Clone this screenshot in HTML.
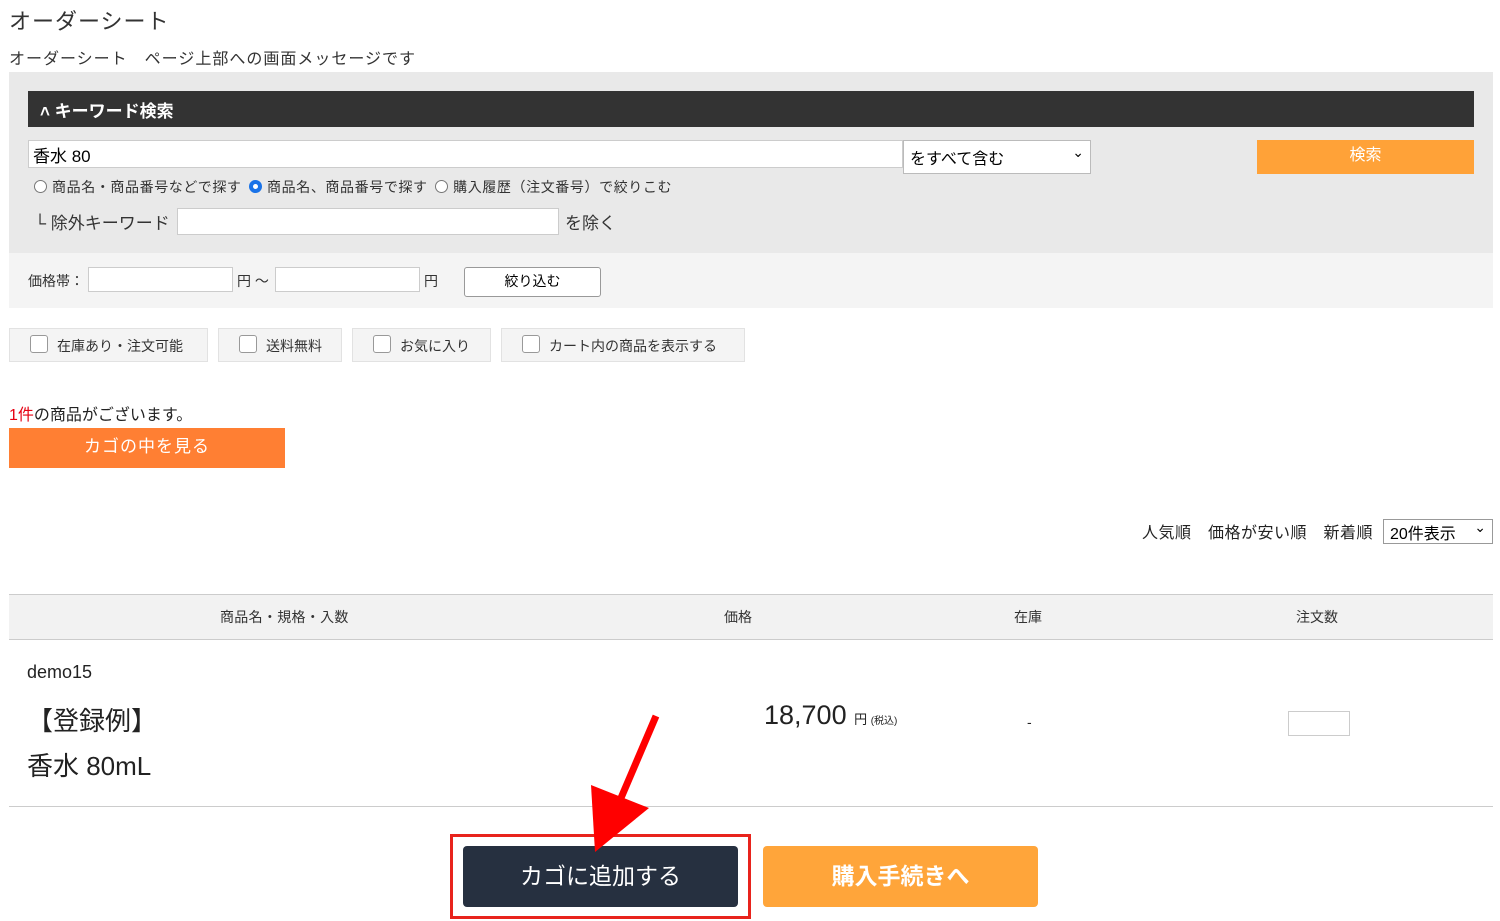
<!DOCTYPE html>
<html><head><meta charset="utf-8"><style>
body{margin:0;width:1500px;height:921px;background:#fff;font-family:"Liberation Sans","Noto Sans CJK JP",sans-serif;color:#222;position:relative;overflow:hidden}
.a{position:absolute;white-space:nowrap}
.inp{position:absolute;background:#fff;border:1px solid #ccc;box-sizing:border-box}
.cb{position:absolute;top:328px;height:34px;background:#f4f4f4;border:1px solid #e2e2e2;box-sizing:border-box;font-size:14px;line-height:34px;color:#333}
.cb i{position:absolute;left:20px;top:6px;width:18px;height:18px;border:1px solid #999;border-radius:3px;background:#fff;box-sizing:border-box}
.rd{display:inline-block;width:13px;height:13px;border:1px solid #777;border-radius:50%;background:#fff;vertical-align:-1px;margin-right:5px;margin-left:3px;box-sizing:border-box}
</style></head><body>
<div class="a" style="left:9px;top:4px;font-size:22px;color:#333;letter-spacing:1px">オーダーシート</div>
<div class="a" style="left:9px;top:45px;font-size:16px;color:#333;letter-spacing:1px">オーダーシート　ページ上部への画面メッセージです</div>
<div class="a" style="left:9px;top:72px;width:1484px;height:181px;background:#e9e9e9"></div>
<div class="a" style="left:9px;top:253px;width:1484px;height:55px;background:#f4f4f4"></div>
<div class="a" style="left:28px;top:91px;width:1446px;height:36px;background:#333"></div>
<div class="a" style="left:40px;top:97px;font-size:17px;font-weight:bold;color:#fff">˄ キーワード検索</div>
<div class="inp" style="left:28px;top:140px;width:875px;height:28px;font-size:17px;padding:1px 4px;color:#000">香水 80</div>
<div class="inp" style="left:903px;top:140px;width:188px;height:34px;font-size:16px;padding:4px 6px;color:#000;border-color:#bbb">をすべて含む<span style="position:absolute;right:6px;top:3px;font-size:14px">⌄</span></div>
<div class="a" style="left:1257px;top:140px;width:217px;height:34px;background:#ffa238;color:#fff;font-size:16px;text-align:center;line-height:32px">検索</div>
<div class="a" style="left:31px;top:177px;font-size:14px;color:#333;letter-spacing:0.6px"><span class="rd"></span>商品名・商品番号などで探す <span class="rd" style="border:4px solid #1a73e8"></span>商品名、商品番号で探す <span class="rd"></span>購入履歴（注文番号）で絞りこむ</div>
<div class="a" style="left:34px;top:209px;font-size:17px;color:#333">└ 除外キーワード</div>
<div class="inp" style="left:177px;top:208px;width:382px;height:27px"></div>
<div class="a" style="left:565px;top:209px;font-size:17px;color:#333">を除く</div>
<div class="a" style="left:28px;top:271px;font-size:14px;color:#333">価格帯：</div>
<div class="inp" style="left:88px;top:267px;width:145px;height:25px"></div>
<div class="a" style="left:237px;top:271px;font-size:14px;color:#333">円 ～</div>
<div class="inp" style="left:275px;top:267px;width:145px;height:25px"></div>
<div class="a" style="left:424px;top:271px;font-size:14px;color:#333">円</div>
<div class="inp" style="left:464px;top:267px;width:137px;height:30px;border-color:#999;border-radius:3px;text-align:center;font-size:14px;line-height:26px;color:#000">絞り込む</div>
<div class="cb" style="left:9px;width:199px"><i></i><span style="margin-left:47px">在庫あり・注文可能</span></div>
<div class="cb" style="left:218px;width:124px"><i></i><span style="margin-left:47px">送料無料</span></div>
<div class="cb" style="left:352px;width:139px"><i></i><span style="margin-left:47px">お気に入り</span></div>
<div class="cb" style="left:501px;width:244px"><i></i><span style="margin-left:47px">カート内の商品を表示する</span></div>
<div class="a" style="left:9px;top:401px;font-size:16px;color:#222"><span style="color:#e60012">1件</span>の商品がございます。</div>
<div class="a" style="left:9px;top:428px;width:276px;height:40px;background:#ff7f33;color:#fff;font-size:17px;text-align:center;line-height:38px;letter-spacing:1px">カゴの中を見る</div>
<div class="a" style="left:1142px;top:519px;font-size:16px;color:#222;letter-spacing:0.5px">人気順　価格が安い順　新着順</div>
<div class="inp" style="left:1383px;top:519px;width:110px;height:25px;border-color:#999;font-size:16px;padding:0px 6px;color:#000">20件表示<span style="position:absolute;right:6px;top:-1px;font-size:14px">⌄</span></div>
<div class="a" style="left:9px;top:594px;width:1484px;height:46px;background:#f2f2f2;border-top:1px solid #ccc;border-bottom:1px solid #ccc;box-sizing:border-box"></div>
<div class="a" style="left:220px;top:607px;font-size:14px;color:#333;letter-spacing:0.3px">商品名・規格・入数</div>
<div class="a" style="left:724px;top:607px;font-size:14px;color:#333">価格</div>
<div class="a" style="left:1014px;top:607px;font-size:14px;color:#333">在庫</div>
<div class="a" style="left:1296px;top:607px;font-size:14px;color:#333">注文数</div>
<div class="a" style="left:27px;top:662px;font-size:18px;color:#222">demo15</div>
<div class="a" style="left:27px;top:699px;font-size:26px;color:#222;line-height:45px">【登録例】<br>香水 80mL</div>
<div class="a" style="left:764px;top:700px;font-size:27px;color:#222">18,700 <span style="font-size:13px">円 <span style="font-size:10px">(税込)</span></span></div>
<div class="a" style="left:1027px;top:714px;font-size:14px">-</div>
<div class="inp" style="left:1288px;top:711px;width:62px;height:25px"></div>
<div class="a" style="left:9px;top:806px;width:1484px;height:1px;background:#ccc"></div>
<div class="a" style="left:450px;top:834px;width:301px;height:85px;border:3px solid #e8231c;box-sizing:border-box"></div>
<div class="a" style="left:463px;top:846px;width:275px;height:61px;background:#263040;border-radius:4px;color:#fff;font-size:23px;text-align:center;line-height:61px">カゴに追加する</div>
<div class="a" style="left:763px;top:846px;width:275px;height:61px;background:#ffa53a;border-radius:4px;color:#fff;font-size:23px;text-align:center;line-height:61px;font-weight:bold">購入手続きへ</div>
<svg class="a" style="left:0;top:0" width="1500" height="921"><line x1="656" y1="716" x2="618" y2="805" stroke="#f00" stroke-width="7"/><polygon points="591,785 649,808 595,852" fill="#f00"/></svg>
</body></html>
